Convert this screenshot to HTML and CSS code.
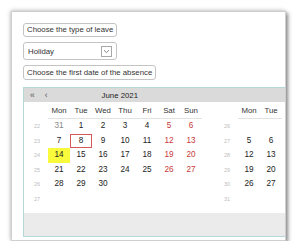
FILE: index.html
```html
<!DOCTYPE html>
<html lang="en">

<head>
    <meta charset="UTF-8">
    <meta name="viewport" content="width=device-width, initial-scale=1.0">
    <title>Leave request</title>
    <link rel="stylesheet" href="styles.css">
</head>

<body>
    <div class="panel">
        <button class="btn btn-type">Choose the type of leave</button>
        <div class="select">
            <span>Holiday</span>
            <span class="select-arrow">
                <svg width="7" height="5" viewBox="0 0 7 5"><path d="M1 1.2 L3.5 3.6 L6 1.2" fill="none" stroke="#777" stroke-width="0.9"/></svg>
            </span>
        </div>
        <button class="btn btn-date">Choose the first date of the absence</button>

        <div class="calendar">
            <div class="cal-head">
                <span class="nav nav-year">&laquo;</span>
                <span class="nav nav-month">&lsaquo;</span>
                <span class="cal-title">June 2021</span>
            </div>
            <div class="months">
                <table class="month">
                    <tr><th class="wk"></th><th>Mon</th><th>Tue</th><th>Wed</th><th>Thu</th><th>Fri</th><th>Sat</th><th>Sun</th></tr>
                    <tr><td class="wk">22</td><td class="other">31</td><td>1</td><td>2</td><td>3</td><td>4</td><td class="we">5</td><td class="we">6</td></tr>
                    <tr><td class="wk">23</td><td>7</td><td class="selected">8</td><td>9</td><td>10</td><td>11</td><td class="we">12</td><td class="we">13</td></tr>
                    <tr><td class="wk">24</td><td class="today">14</td><td>15</td><td>16</td><td>17</td><td>18</td><td class="we">19</td><td class="we">20</td></tr>
                    <tr><td class="wk">25</td><td>21</td><td>22</td><td>23</td><td>24</td><td>25</td><td class="we">26</td><td class="we">27</td></tr>
                    <tr><td class="wk">26</td><td>28</td><td>29</td><td>30</td><td></td><td></td><td></td><td></td></tr>
                    <tr><td class="wk">27</td><td></td><td></td><td></td><td></td><td></td><td></td><td></td></tr>
                </table>
                <!-- next month, only the columns that fit in the panel -->
                <table class="month">
                    <tr><th class="wk"></th><th>Mon</th><th>Tue</th></tr>
                    <tr><td class="wk">26</td><td></td><td></td></tr>
                    <tr><td class="wk">27</td><td>5</td><td>6</td></tr>
                    <tr><td class="wk">28</td><td>12</td><td>13</td></tr>
                    <tr><td class="wk">29</td><td>19</td><td>20</td></tr>
                    <tr><td class="wk">30</td><td>26</td><td>27</td></tr>
                    <tr><td class="wk">31</td><td></td><td></td></tr>
                </table>
            </div>
            <div class="cal-foot"></div>
        </div>
    </div>
</body>

</html>
```

FILE: styles.css
```css
body {
    margin: 0;
    background-color: #fff;
    font-family: "Liberation Sans", Arial, sans-serif;
    color: #222;
}

.panel {
    box-sizing: border-box;
    width: 275px;
    height: 230px;
    margin: 11px 0 0 11px;
    padding: 11px 0 0 11px;
    border: 1px solid #cfcfcf;
    background-color: #fff;
    overflow: hidden;
    box-shadow: 2px 2px 4px rgba(0, 0, 0, 0.45), -1px -1px 4px rgba(0, 0, 0, 0.18);
}

.btn {
    display: block;
    box-sizing: border-box;
    margin: 0;
    padding: 0 3px;
    border: 1px solid #c4c4c4;
    border-radius: 3px;
    background-color: #fff;
    font-family: inherit;
    font-size: 7.8px;
    color: #333;
    white-space: nowrap;
}

.btn-type {
    height: 14px;
    line-height: 12px;
}

.btn-date {
    height: 15px;
    line-height: 13px;
    margin-top: 5px;
}

.select {
    box-sizing: border-box;
    display: flex;
    align-items: center;
    justify-content: space-between;
    width: 94px;
    height: 18px;
    margin-top: 5px;
    padding: 0 4px;
    border: 1px solid #c4c4c4;
    border-radius: 3px;
    font-size: 7.8px;
    color: #333;
}

.select-arrow {
    box-sizing: border-box;
    display: flex;
    align-items: center;
    justify-content: center;
    width: 11px;
    height: 11px;
    border: 1px solid #a8a8a8;
}

.calendar {
    width: 400px;
    margin-top: 7px;
    border: 1px solid #b4d9d6;
    font-size: 7.8px;
}

.cal-head {
    display: flex;
    align-items: center;
    height: 14px;
    padding-left: 6px;
    background-color: #dadada;
    color: #444;
}

.nav {
    font-size: 8.5px;
    color: #555;
}

.nav-month {
    margin-left: 10px;
}

.cal-title {
    margin-left: 54px;
    color: #222;
}

.months {
    display: flex;
    gap: 14px;
    padding: 0 0 6px 2px;
}

.month {
    border-collapse: separate;
    border-spacing: 0;
    table-layout: fixed;
}

.month th,
.month td {
    width: 22px;
    padding: 0;
    text-align: center;
    font-weight: normal;
}

.month th {
    height: 14px;
    padding-top: 2px;
    line-height: 14px;
    color: #333;
    border-bottom: 1px solid #e2e2e2;
}

.month th.wk {
    border-bottom: none;
}

.month td {
    height: 14.6px;
    line-height: 14.6px;
    font-size: 8.2px;
}

.month td.wk {
    font-size: 5.5px;
    color: #bdbdbd;
}

.month td.other {
    color: #888;
}

.month td.we {
    color: #c93838;
}

.month td.today {
    background-color: #fafa3c;
}

.month td.selected {
    box-shadow: inset 0 0 0 1px #d45a5a;
}

.cal-foot {
    height: 23px;
    background-color: #ebebeb;
}
```
